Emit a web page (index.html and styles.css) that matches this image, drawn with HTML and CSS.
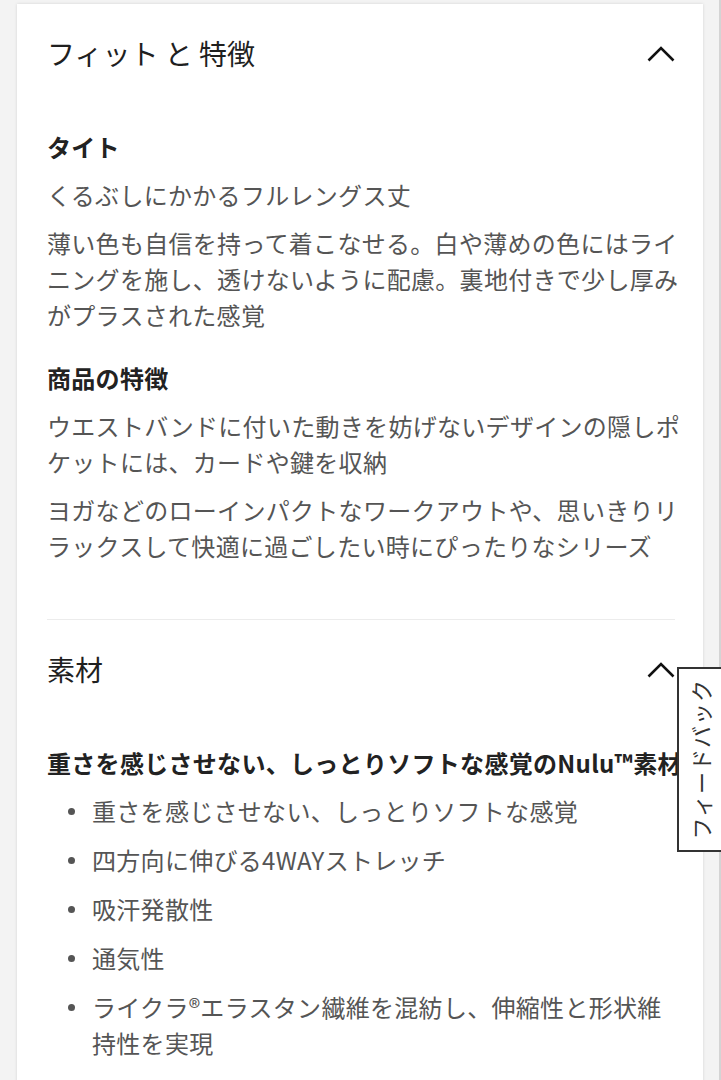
FILE: index.html
```html
<!DOCTYPE html>
<html lang="ja">
<head>
<meta charset="utf-8">
<title>フィット と 特徴</title>
<link rel="stylesheet" href="styles.css">
</head>
<body>
<div class="card">
  <section class="acc">
    <div class="acc-head">
      <h2 class="acc-title">フィット と 特徴</h2>
      <svg class="chev" viewBox="0 0 28 16" width="28" height="16"><path d="M1.5 14.5 L14 2 L26.5 14.5" fill="none" stroke="#111" stroke-width="2.6"/></svg>
    </div>
    <div class="acc-body">
      <h3 class="sub">タイト</h3>
      <p class="txt">くるぶしにかかるフルレングス丈</p>
      <p class="txt">薄い色も自信を持って着こなせる。白や薄めの色にはライニングを施し、透けないように配慮。裏地付きで少し厚みがプラスされた感覚</p>
      <h3 class="sub sub-gap">商品の特徴</h3>
      <p class="txt">ウエストバンドに付いた動きを妨げないデザインの隠しポケットには、カードや鍵を収納</p>
      <p class="txt">ヨガなどのローインパクトなワークアウトや、思いきりリラックスして快適に過ごしたい時にぴったりなシリーズ</p>
    </div>
  </section>
  <section class="acc acc-divided">
    <div class="acc-head">
      <h2 class="acc-title">素材</h2>
      <svg class="chev" viewBox="0 0 28 16" width="28" height="16"><path d="M1.5 14.5 L14 2 L26.5 14.5" fill="none" stroke="#111" stroke-width="2.6"/></svg>
    </div>
    <div class="acc-body">
      <h3 class="sub nowrap">重さを感じさせない、しっとりソフトな感覚のNulu™素材</h3>
      <ul class="list">
        <li>重さを感じさせない、しっとりソフトな感覚</li>
        <li>四方向に伸びる4WAYストレッチ</li>
        <li>吸汗発散性</li>
        <li>通気性</li>
        <li>ライクラ®エラスタン繊維を混紡し、伸縮性と形状維持性を実現</li>
      </ul>
    </div>
  </section>
</div>
<div class="feedback"><span class="feedback-text">フィードバック</span></div>
</body>
</html>
```
FILE: styles.css
```css
html, body {
  margin: 0;
  padding: 0;
}
body {
  background: #f3f3f3;
  font-family: "Noto Sans CJK JP", "Noto Sans", sans-serif;
  color: #222;
  overflow: hidden;
  height: 1080px;
  box-shadow: inset -2px 0 0 #d4d4d4;
}
.card {
  background: #fff;
  margin: 4px 18px 0 17px;
  padding: 0 28px 0 30px;
  box-shadow: 0 0 3px rgba(0, 0, 0, 0.13);
  min-height: 1200px;
}
.acc-head {
  display: flex;
  align-items: center;
  justify-content: space-between;
  padding: 28px 0;
}
.acc-title {
  margin: 0;
  font-size: 28px;
  font-weight: 400;
  line-height: 42px;
  color: #1f1f1f;
}
.chev {
  display: block;
  margin-top: 2px;
}
.acc-body {
  padding: 27px 0 55px;
  margin-right: -6px;
}
.acc-divided {
  border-top: 1px solid #ececec;
}
.sub {
  margin: 0;
  font-size: 24px;
  font-weight: 700;
  line-height: 36px;
  letter-spacing: 0.3px;
  color: #222;
}
.sub-gap {
  margin-top: 27px;
}
.nowrap {
  white-space: nowrap;
}
.txt {
  margin: 12px 0 0;
  font-size: 24px;
  line-height: 36px;
  letter-spacing: 0.3px;
  color: #555;
}
.list {
  list-style: none;
  margin: 12px 0 0;
  padding: 0 0 0 45px;
}
.list li {
  position: relative;
  font-size: 24px;
  line-height: 36px;
  letter-spacing: 0.3px;
  color: #555;
  margin-bottom: 13px;
}
.list li::before {
  content: "";
  position: absolute;
  left: -24px;
  top: 15px;
  width: 7px;
  height: 7px;
  border-radius: 50%;
  background: #555;
}
.feedback {
  position: fixed;
  right: 0;
  top: 667px;
  width: 44px;
  height: 185px;
  box-sizing: border-box;
  background: #fff;
  border: 2px solid #333;
  border-right: none;
  display: flex;
  align-items: center;
  justify-content: center;
}
.feedback-text {
  writing-mode: vertical-rl;
  text-orientation: sideways;
  transform: rotate(180deg);
  font-size: 22px;
  font-weight: 400;
  letter-spacing: 1px;
  color: #333;
  line-height: 1;
}
```
